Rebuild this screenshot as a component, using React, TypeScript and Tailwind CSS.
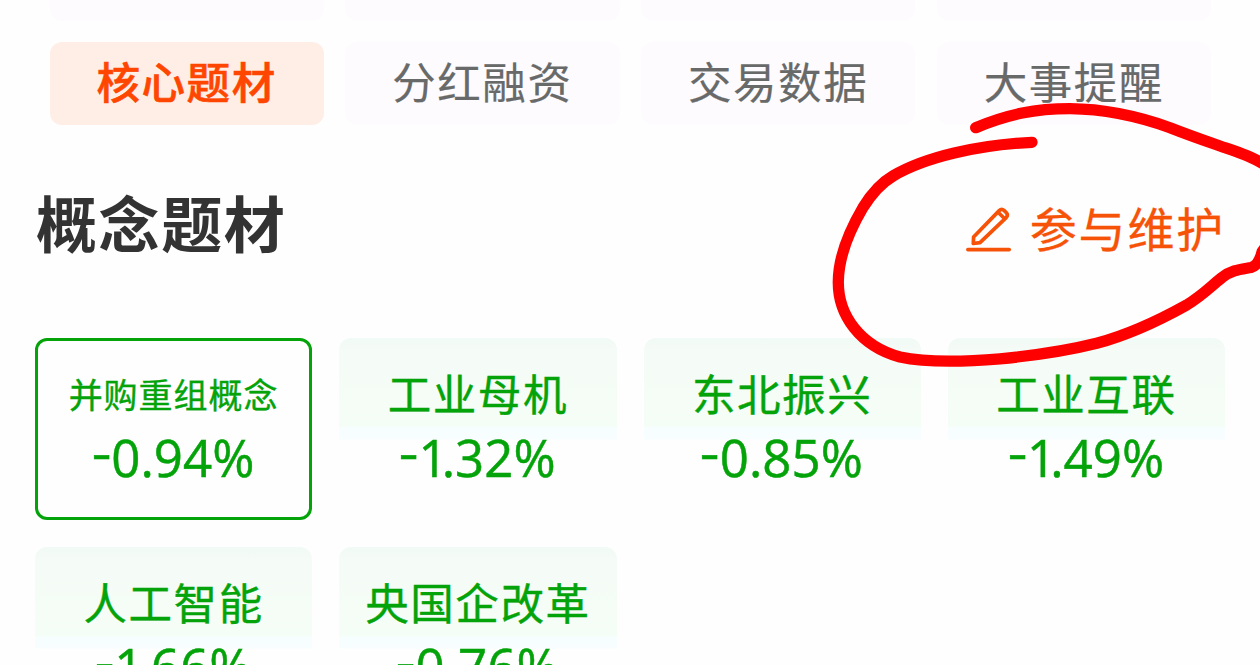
import React from "react";

interface Tab {
  id: number;
  label: string;
  active?: boolean;
}

interface Concept {
  id: number;
  name: string;
  change: string;
  selected?: boolean;
}

const tabs: Tab[] = [
  { id: 1, label: "核心题材", active: true },
  { id: 2, label: "分红融资" },
  { id: 3, label: "交易数据" },
  { id: 4, label: "大事提醒" },
];

const concepts: Concept[] = [
  { id: 1, name: "并购重组概念", change: "-0.94%", selected: true },
  { id: 2, name: "工业母机", change: "-1.32%" },
  { id: 3, name: "东北振兴", change: "-0.85%" },
  { id: 4, name: "工业互联", change: "-1.49%" },
  { id: 5, name: "人工智能", change: "-1.66%" },
  { id: 6, name: "央国企改革", change: "-0.76%" },
];

const EditIcon: React.FC = () => (
  <svg
    className="mt-[11px] h-[48px] w-[48px]"
    viewBox="0 0 48 48"
    fill="none"
    stroke="currentColor"
    strokeWidth="3.7"
    strokeLinecap="round"
    strokeLinejoin="round"
  >
    <path d="M7.3 37.5 L7.6 31 L33.2 4.6 Q35.6 2.2 38 4.4 L40.4 6.8 Q42.4 9.2 40.2 11.6 L14 36.6 Z" />
    <path d="M32.8 7 L38 12" />
    <path d="M1.9 43.6 H43.2" />
  </svg>
);

// The lone "1" is set tighter than the other digits
const Change: React.FC<{ value: string }> = ({ value }) => {
  const startsWithOne = value[1] === "1";
  return (
    <div className="flex h-[60px] pl-[2px] font-['Open_Sans',sans-serif] text-[51px] leading-[60px] [-webkit-text-stroke:0.5px]">
      <span className="origin-right -translate-y-[6px] scale-x-[1.2]">
        {value[0]}
      </span>
      <span className={startsWithOne ? "tracking-[-6px]" : ""}>
        {value[1]}
      </span>
      <span>{value.slice(2)}</span>
    </div>
  );
};

const ConceptCard: React.FC<{ concept: Concept }> = ({ concept }) => (
  <div
    className={`flex h-[182px] flex-col items-center rounded-xl text-[#04a30a] ${
      concept.selected
        ? "border-3 border-[#04a30a] bg-[#fefefe] pt-[24px]"
        : "bg-[linear-gradient(to_bottom,#f1faf6_0px,#f5fbf7_12px,#f5fef6_88px,#f7feff_90px,#f8feff_101px,#fefefe_102px)] pt-[27px]"
    }`}
  >
    <div
      className={`h-[62px] whitespace-nowrap [-webkit-text-stroke:0.4px] ${
        concept.selected
          ? "text-[34px] leading-[58px] tracking-[1px]"
          : "text-[43.5px] leading-[56px] tracking-[1.6px]"
      }`}
    >
      {concept.name}
    </div>
    <Change value={concept.change} />
  </div>
);

const App: React.FC = () => {
  return (
    <div className="relative h-[665px] w-[1260px] overflow-hidden bg-[#fefefe] font-['Noto_Sans_CJK_SC',sans-serif]">
      {/* bottom edge of the tab row scrolled out above */}
      <div className="grid grid-cols-4 gap-[21.5px] pl-[49.5px] pr-[49px]">
        {tabs.map((tab) => (
          <div key={tab.id} className="h-[21px] rounded-b-xl bg-[#fefbff]" />
        ))}
      </div>

      <div className="mt-[21px] grid grid-cols-4 gap-[21.5px] pl-[49.5px] pr-[49px]">
        {tabs.map((tab) => (
          <div
            key={tab.id}
            className={`flex h-[82.5px] items-center justify-center rounded-xl pb-[6px] text-[43.5px] leading-none tracking-[1.6px] ${
              tab.active
                ? "bg-[#ffeee6] font-medium text-[#fe4600] [-webkit-text-stroke:0.6px]"
                : "bg-[#fefbff] text-[#686a69] [-webkit-text-stroke:0.2px]"
            }`}
          >
            {tab.label}
          </div>
        ))}
      </div>

      <div className="mt-[59px] flex h-[82px] items-center justify-between pl-[36px] pr-[35px]">
        <h2 className="-mt-[7px] text-[61px] font-bold leading-none tracking-[1.6px] text-[#333333]">
          概念题材
        </h2>
        <div className="flex items-center gap-[16px] text-[#f65208]">
          <EditIcon />
          <span className="mt-[3px] text-[47px] leading-none tracking-[1.8px] [-webkit-text-stroke:0.3px]">
            参与维护
          </span>
        </div>
      </div>

      <div className="mt-[72px] grid grid-cols-4 gap-[27px] px-[35px]">
        {concepts.map((concept) => (
          <ConceptCard key={concept.id} concept={concept} />
        ))}
      </div>

      {/* hand-drawn marker loop */}
      <svg
        className="pointer-events-none absolute inset-0"
        width="1260"
        height="665"
        viewBox="0 0 1260 665"
        fill="none"
        stroke="#ff0000"
        strokeWidth="11.3"
        strokeLinecap="round"
        strokeLinejoin="round"
      >
        <path d="M975.7 127.7 C1008 114 1036 108.7 1070 108.7 C1106 109 1140 117 1170 127.7 C1190 135.5 1203 140 1220 146 C1236 151.5 1252 156 1268 167 C1290 190 1275 235 1262 252 C1260 260 1257 266 1251 267.5 C1240 269.5 1232 270 1222 277.5 C1210 287 1203 295 1186.7 305 C1158 321 1128 335 1096.7 343.3 C1066 351 1030 356 1000 358.8 C968 361.5 928 363 900 357 C860 346 838 315 838.3 281.7 C838.5 258 848 233 863 207.5 C872 193 881 183 893 176 C925 157 978 145 1032 142.3" />
      </svg>
    </div>
  );
};

export default App;
